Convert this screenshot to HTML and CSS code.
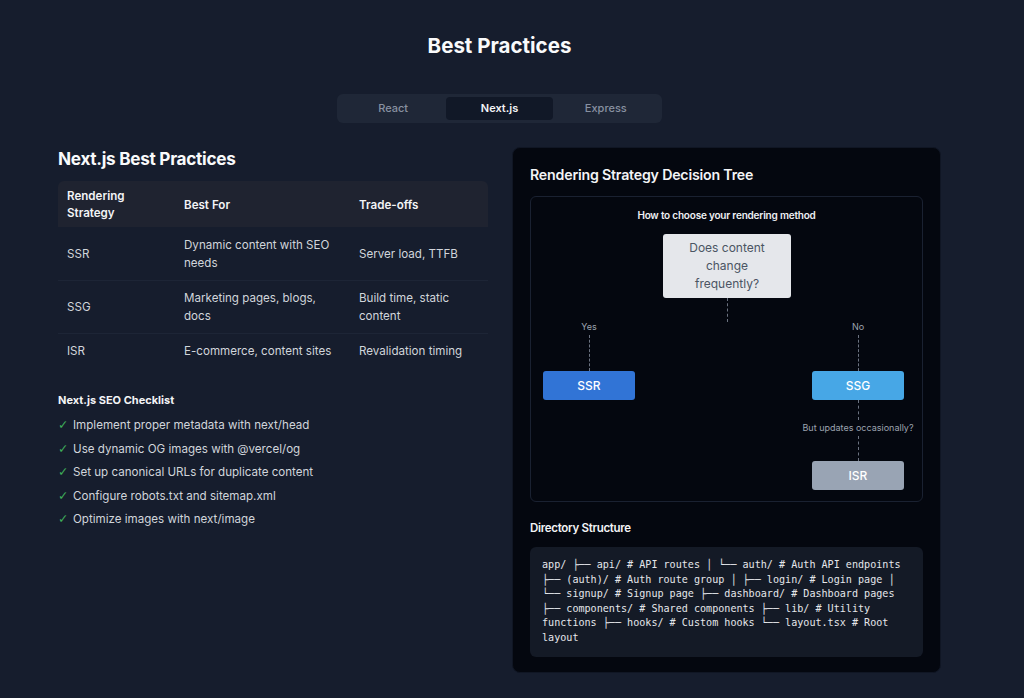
FILE: index.html
```html
<!DOCTYPE html>
<html lang="en">
<head>
<meta charset="utf-8">
<title>Best Practices</title>
<link rel="stylesheet" href="styles.css">
</head>
<body>
<div class="page">
  <h1 class="title">Best Practices</h1>
  <div class="tabs">
    <div class="tab">React</div>
    <div class="tab active">Next.js</div>
    <div class="tab">Express</div>
  </div>
  <div class="grid">
    <section class="left">
      <h2 class="section-title">Next.js Best Practices</h2>
      <table class="table">
        <thead>
          <tr><th class="c1">Rendering Strategy</th><th class="c2">Best For</th><th class="c3">Trade-offs</th></tr>
        </thead>
        <tbody>
          <tr><td>SSR</td><td>Dynamic content with SEO needs</td><td>Server load, TTFB</td></tr>
          <tr><td>SSG</td><td>Marketing pages, blogs, docs</td><td>Build time, static content</td></tr>
          <tr><td>ISR</td><td>E-commerce, content sites</td><td>Revalidation timing</td></tr>
        </tbody>
      </table>
      <h3 class="check-title">Next.js SEO Checklist</h3>
      <ul class="checklist">
        <li><span class="tick">✓</span>Implement proper metadata with next/head</li>
        <li><span class="tick">✓</span>Use dynamic OG images with @vercel/og</li>
        <li><span class="tick">✓</span>Set up canonical URLs for duplicate content</li>
        <li><span class="tick">✓</span>Configure robots.txt and sitemap.xml</li>
        <li><span class="tick">✓</span>Optimize images with next/image</li>
      </ul>
    </section>
    <section class="card">
      <h2 class="card-title">Rendering Strategy Decision Tree</h2>
      <div class="tree">
        <div class="tree-caption">How to choose your rendering method</div>
        <div class="q-box">Does content change frequently?</div>
        <div class="dash d-q"></div>
        <div class="lbl l-yes">Yes</div>
        <div class="lbl l-no">No</div>
        <div class="dash d-yes"></div>
        <div class="dash d-no"></div>
        <div class="node ssr">SSR</div>
        <div class="node ssg">SSG</div>
        <div class="dash d-ssg"></div>
        <div class="lbl l-but">But updates occasionally?</div>
        <div class="dash d-isr"></div>
        <div class="node isr">ISR</div>
      </div>
      <h3 class="dir-title">Directory Structure</h3>
      <div class="code">app/ ├── api/ # API routes │ └── auth/ # Auth API endpoints ├── (auth)/ # Auth route group │ ├── login/ # Login page │ └── signup/ # Signup page ├── dashboard/ # Dashboard pages ├── components/ # Shared components ├── lib/ # Utility functions ├── hooks/ # Custom hooks └── layout.tsx # Root layout</div>
    </section>
  </div>
</div>
</body>
</html>
```
FILE: styles.css
```css
* { box-sizing: border-box; }
html, body { margin: 0; padding: 0; }
body {
  background: #161d2d;
  font-family: Inter, "Noto Sans", "Liberation Sans", sans-serif;
  color: #e5e7eb;
}
.page {
  width: 883px;
  margin-left: 58px;
  padding-top: 32px;
}
.title {
  margin: 0;
  text-align: center;
  font-size: 20.5px;
  line-height: 28px;
  font-weight: 700;
  color: #f9fafb;
  letter-spacing: 0;
}
.tabs {
  width: 325px;
  height: 29px;
  margin: 34px auto 24px;
  background: #1f2737;
  border-radius: 6px;
  padding: 3px;
  display: grid;
  grid-template-columns: 1fr 1fr 1fr;
}
.tab {
  display: flex;
  align-items: center;
  justify-content: center;
  font-size: 11px;
  line-height: 14px;
  padding-bottom: 1px;
  color: #8891a1;
  font-weight: 500;
  border-radius: 4px;
}
.tab.active {
  background: #111827;
  color: #f3f4f6;
  font-weight: 600;
}
.grid {
  display: grid;
  grid-template-columns: 430px 429px;
  column-gap: 24px;
  align-items: start;
}
.section-title {
  margin: 0;
  font-size: 17.2px;
  line-height: 24px;
  font-weight: 700;
  color: #f9fafb;
  letter-spacing: -0.3px;
}
.table {
  margin-top: 10px;
  width: 430px;
  border-collapse: collapse;
  font-size: 11.6px;
}
.table th {
  background: #1f2330;
  text-align: left;
  font-weight: 600;
  color: #f3f4f6;
  line-height: 17px;
  padding: 7px 9px 5px;
  vertical-align: middle;
}
.table th.c1 { width: 117px; border-top-left-radius: 6px; }
.table th.c2 { width: 175px; }
.table th.c3 { border-top-right-radius: 6px; }
.table td {
  color: #d1d5db;
  line-height: 18px;
  padding: 8px 9px 8px;
  vertical-align: middle;
  border-top: 1px solid #1d2536;
}
.table tbody tr:first-child td { border-top: none; padding-top: 9px; }
.check-title {
  margin: 24px 0 8px;
  font-size: 11px;
  line-height: 16px;
  font-weight: 700;
  color: #f3f4f6;
}
.checklist {
  list-style: none;
  margin: 0;
  padding: 0;
  display: flex;
  flex-direction: column;
  gap: 5.5px;
}
.checklist li {
  font-size: 11.6px;
  line-height: 18px;
  color: #d1d5db;
  display: flex;
  align-items: center;
}
.tick {
  color: #3fae5a;
  width: 15px;
  font-family: "DejaVu Sans", sans-serif;
  font-size: 12.5px;
  line-height: 18px;
}
.card {
  background: #04070f;
  border-radius: 8px;
  border: 1px solid #101624;
  padding: 17px 17px 15px;
}
.card-title {
  margin: 0 0 11px;
  font-size: 14.2px;
  line-height: 20px;
  font-weight: 600;
  color: #f3f4f6;
  letter-spacing: -0.2px;
}
.tree {
  position: relative;
  height: 306px;
  border: 1px solid #1a2131;
  border-radius: 6px;
}
.tree-caption {
  position: absolute;
  top: 11px;
  left: 0;
  right: 0;
  text-align: center;
  font-size: 10px;
  line-height: 14px;
  font-weight: 600;
  color: #eef0f3;
  letter-spacing: -0.2px;
}
.q-box {
  position: absolute;
  left: 132px;
  top: 37px;
  width: 128px;
  height: 64px;
  background: #e5e7eb;
  border-radius: 3px;
  color: #4b5563;
  font-size: 12px;
  line-height: 18px;
  text-align: center;
  padding: 5px 18px;
}
.dash {
  position: absolute;
  width: 0;
  border-left: 1px dashed #6b7280;
}
.d-q { left: 196px; top: 101px; height: 24px; }
.d-yes { left: 58px; top: 138px; height: 36px; }
.d-no { left: 327px; top: 138px; height: 36px; }
.d-ssg { left: 327px; top: 203px; height: 20px; }
.d-isr { left: 327px; top: 239px; height: 25px; }
.lbl {
  position: absolute;
  width: 140px;
  text-align: center;
  font-size: 9px;
  line-height: 12px;
  color: #9ca3af;
}
.l-yes { left: -12px; top: 124px; }
.l-no { left: 257px; top: 124px; }
.l-but { left: 257px; top: 225px; }
.node {
  position: absolute;
  width: 92px;
  height: 29px;
  border-radius: 3px;
  display: flex;
  align-items: center;
  justify-content: center;
  font-size: 12px;
  font-weight: 500;
  color: #ffffff;
}
.ssr { left: 12px; top: 174px; background: #3174d6; }
.ssg { left: 281px; top: 174px; background: #47a7e6; }
.isr { left: 281px; top: 264px; background: #99a4b4; }
.dir-title {
  margin: 18px 0 11px;
  font-size: 11.5px;
  line-height: 16px;
  font-weight: 600;
  color: #f3f4f6;
  letter-spacing: -0.3px;
}
.code {
  background: #141a26;
  border-radius: 6px;
  padding: 11px 12px 12px;
  font-family: "DejaVu Sans Mono", "Liberation Mono", monospace;
  font-size: 10.1px;
  line-height: 14.5px;
  color: #e5e7eb;
  white-space: normal;
}
```
